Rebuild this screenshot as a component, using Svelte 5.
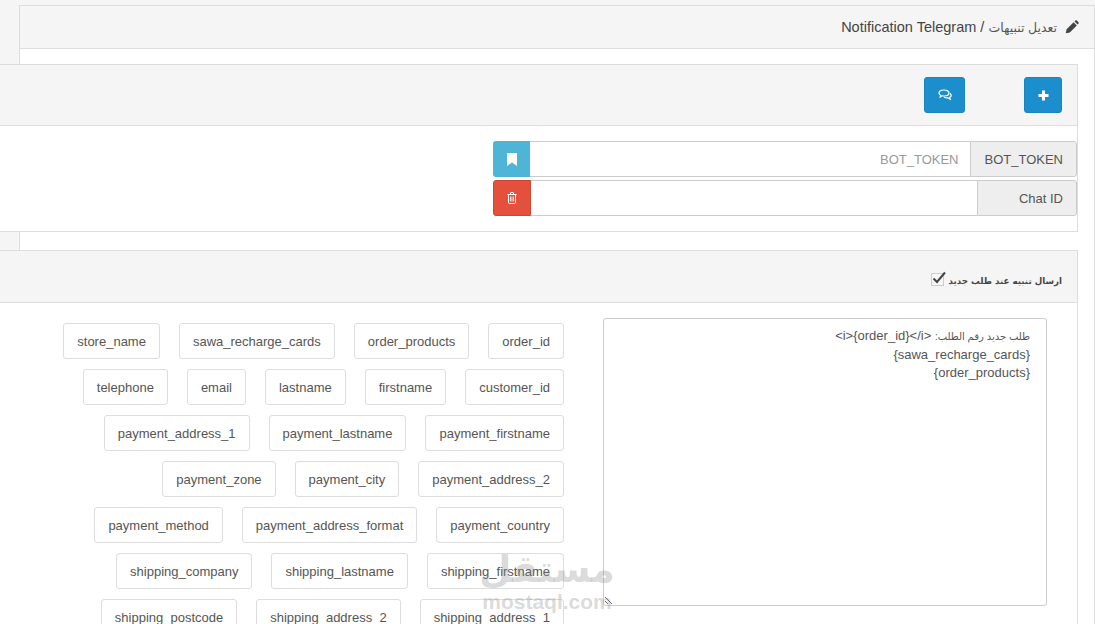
<script>
  const tags = [
    "order_id", "order_products", "sawa_recharge_cards", "store_name",
    "customer_id", "firstname", "lastname", "email", "telephone",
    "payment_firstname", "payment_lastname", "payment_address_1",
    "payment_address_2", "payment_city", "payment_zone",
    "payment_country", "payment_address_format", "payment_method",
    "shipping_firstname", "shipping_lastname", "shipping_company",
    "shipping_address_1", "shipping_address_2", "shipping_postcode"
  ];
</script>

<div class="page" dir="rtl">
  <div class="outer">
    <div class="outer-head">
      <svg class="pencil" viewBox="0 0 14 14" width="14" height="14">
        <path d="M.8 13.200l.8-4 7-7 3.200 3.200-7 7zM9.500 1.400l.9-.9c.4-.4 1-.4 1.400 0l1.700 1.700c.4.400.4 1 0 1.400l-.9.9z" fill="#444" />
      </svg>
      <span><span class="ar">تعديل تنبيهات</span> / <bdi>Notification Telegram</bdi></span>
    </div>
    <div class="outer-body">
      <section class="panel">
        <div class="panel-head actions">
          <button class="btn plus" aria-label="add">
            <svg viewBox="0 0 11 11" width="11" height="11"><path d="M4 .5h3v3.500h3.500v3H7v3.500H4V7H.5V4H4z" fill="#fff" /></svg>
          </button>
          <button class="btn chat" aria-label="messages">
            <svg viewBox="0 0 14 12" width="14" height="12" fill="none" stroke="#fff" stroke-width="1.200">
              <path d="M6 1C3 1 1 2.300 1 4c0 1 .7 1.800 1.700 2.300L2.200 8l2-1.200c.6.100 1.200.2 1.800.2 2.800 0 5-1.300 5-3S8.800 1 6 1z" />
              <path d="M12 4.500c.7.500 1.200 1.100 1.200 1.900 0 .9-.6 1.600-1.500 2l.5 1.800-2.100-1.300c-1.500.2-3-.1-4-.9" />
            </svg>
          </button>
        </div>
        <div class="panel-body fields">
          <div class="group">
            <span class="addon">BOT_TOKEN</span>
            <input type="text" placeholder="BOT_TOKEN" />
            <button class="side info" aria-label="save">
              <svg viewBox="0 0 10 13" width="10" height="13"><path d="M0 0h10v13L5 9.500 0 13z" fill="#fff" /></svg>
            </button>
          </div>
          <div class="group">
            <span class="addon">Chat ID</span>
            <input type="text" />
            <button class="side danger" aria-label="delete">
              <svg viewBox="0 0 10 12" width="10" height="12" fill="none" stroke="#fff" stroke-width="1">
                <path d="M.5 2.500h9M1.500 2.500v8c0 .6.4 1 1 1h5c.6 0 1-.4 1-1v-8M3.500 2.500V1c0-.3.2-.5.500-.5h2c.3 0 .5.200.5.500v1.500" />
                <path d="M3.500 4.500v5M5 4.500v5M6.500 4.500v5" stroke-width=".8" />
              </svg>
            </button>
          </div>
        </div>
      </section>

      <section class="panel second">
        <div class="panel-head notify">
          <span class="label">ارسال تنبيه عند طلب جديد</span>
          <span class="check">
            <svg viewBox="0 0 16 14" width="16" height="14"><path d="M1.500 7.500l3.500 3.500L13 1.500" fill="none" stroke="#444" stroke-width="2" /></svg>
          </span>
        </div>
        <div class="panel-body compose">
          <div class="message">
            <div><span class="ar-small">طلب جديد رقم الطلب:</span> <bdi>{"<i>{order_id}</i>"}</bdi></div>
            <div>{"{sawa_recharge_cards}"}</div>
            <div>{"{order_products}"}</div>
          </div>
          <div class="tags">
            {#each tags as tag}
              <button class="tag">{tag}</button>
            {/each}
          </div>
        </div>
      </section>
    </div>
  </div>
  <div class="mark" dir="ltr">
    <span class="mark-ar">مستقل</span>
    <span class="mark-en">mostaql.com</span>
  </div>
</div>

<style>
  :global(body) {
    background: #f5f5f5;
    overflow: hidden;
  }
  .page {
    position: relative;
    height: 624px;
    overflow: hidden;
    padding-top: 5px;
    box-sizing: border-box;
    font-family: "Liberation Sans", "DejaVu Sans", sans-serif;
    font-size: 13px;
    color: #555;
  }
  .outer {
    margin-left: 18px;
    width: 1076px;
    box-sizing: border-box;
    border: 1px solid #ddd;
    background: #fff;
  }
  .outer-head {
    height: 42px;
    border-bottom: 1px solid #ddd;
    background: #f5f5f5;
    display: flex;
    align-items: center;
    gap: 8px;
    padding-right: 15px;
    font-size: 14.500px;
    color: #444;
  }
  .ar {
    font-size: 12.500px;
    color: #555;
  }
  .pencil {
    flex: none;
  }
  .outer-body {
    padding: 15px 16px 0 0;
    margin-left: -60px;
  }
  .panel {
    border: 1px solid #ddd;
    background: #fff;
  }
  .second {
    margin-top: 18px;
    height: 500px;
  }
  .panel-head {
    background: #f5f5f5;
    border-bottom: 1px solid #ddd;
    display: flex;
    align-items: center;
    box-sizing: border-box;
  }
  .actions {
    height: 61px;
    padding: 0 15px;
    gap: 59px;
  }
  .btn {
    height: 36px;
    padding: 0;
    border: 1px solid #1a84c0;
    border-radius: 3px;
    background: #1b8fce;
    display: flex;
    align-items: center;
    justify-content: center;
  }
  .plus {
    width: 38px;
  }
  .chat {
    width: 41px;
  }
  .fields {
    padding: 15px 0;
    display: flex;
    flex-direction: column;
    gap: 3px;
  }
  .group {
    width: 584px;
    height: 36px;
    display: flex;
  }
  .addon {
    box-sizing: border-box;
    min-width: 100px;
    padding: 0 13px;
    border: 1px solid #ccc;
    border-radius: 0 3px 3px 0;
    background: #eee;
    display: flex;
    align-items: center;
    color: #555;
  }
  input {
    flex: 1;
    min-width: 0;
    box-sizing: border-box;
    height: 36px;
    padding: 0 12px;
    border: 1px solid #ccc;
    border-width: 1px 0;
    outline: none;
    font: inherit;
    color: #555;
  }
  input::placeholder {
    color: #999;
  }
  .side {
    width: 37px;
    padding: 0;
    border: none;
    border-radius: 3px 0 0 3px;
    display: flex;
    align-items: center;
    justify-content: center;
  }
  .info {
    background: #4fb5d6;
  }
  .danger {
    width: 38px;
    background: #e5503c;
    border: 1px solid #d64230;
  }
  .notify {
    height: 52px;
    padding: 9px 15px 0;
    gap: 4px;
  }
  .label {
    font-family: "DejaVu Sans", sans-serif;
    font-size: 8.700px;
    font-weight: bold;
    color: #444;
  }
  .check {
    position: relative;
    width: 11px;
    height: 11px;
    margin-top: -4px;
    border: 1px solid #ccc;
    background: #f8f8f8;
  }
  .check svg {
    position: absolute;
    left: 0;
    top: -3px;
  }
  .compose {
    padding: 15px 30px 0 0;
    display: flex;
    gap: 39px;
    align-items: flex-start;
  }
  .message {
    flex: none;
    width: 444px;
    height: 288px;
    box-sizing: border-box;
    padding: 8px 16px;
    border: 1px solid #ccc;
    border-radius: 3px;
    overflow: auto;
    resize: both;
    line-height: 18px;
    color: #555;
  }
  .ar-small {
    font-size: 10px;
  }
  .tags {
    width: 534px;
    margin-top: 5px;
    display: flex;
    flex-wrap: wrap;
    gap: 10px 19px;
  }
  .tag {
    height: 36px;
    padding: 0 13px;
    border: 1px solid #ddd;
    border-radius: 3px;
    background: #fff;
    font: inherit;
    color: #555;
  }
  .mark {
    position: absolute;
    left: 480px;
    top: 548px;
    width: 134px;
    display: flex;
    flex-direction: column;
    align-items: center;
    color: rgba(140, 140, 140, 0.32);
    font-family: "DejaVu Sans", sans-serif;
    font-weight: bold;
    pointer-events: none;
  }
  .mark-ar {
    font-size: 37px;
    line-height: 44px;
  }
  .mark-en {
    font-family: "Liberation Sans", sans-serif;
    font-size: 21px;
    line-height: 20px;
  }
</style>
